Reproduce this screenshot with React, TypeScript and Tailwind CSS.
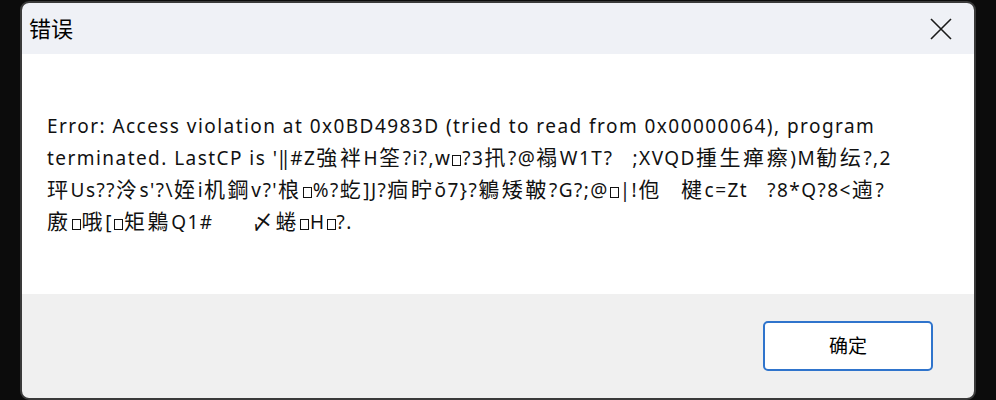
const lines = [
  "Error: Access violation at 0x0BD4983D (tried to read from 0x00000064), program",
  "terminated. LastCP is '‖#Z強袢H筌?i?,w□?3扟?@褟W1T?   ;XVQD揰生瘅瘵)M勧纭?,2",
  "玶Us??泠s'?\\姪i机鋼v?'桹□%?虼]J?痐眝ŏ7}?鵴矮鞁?G?;@□|!佨   楗c=Zt   ?8*Q?8<遖?",
  "廒□哦[□矩鷍Q1#      〆蜷□H□?.",
]

const isWide = (ch: string) => /[\u2E80-\u9FFF\uF900-\uFAFF\uFF00-\uFFEF]/.test(ch)

function Box() {
  return <span className="inline-block w-[9px] h-[11px] border border-[#111] mx-[1px] align-[-1px]" />
}

// split a line into runs of wide (CJK) chars, narrow chars and missing-glyph boxes
function Line({ text }: { text: string }) {
  const runs: { kind: "wide" | "narrow" | "box"; s: string }[] = []
  for (const ch of Array.from(text)) {
    const kind = ch === "□" ? "box" : isWide(ch) ? "wide" : "narrow"
    const last = runs[runs.length - 1]
    if (last && last.kind === kind && kind !== "box") last.s += ch
    else runs.push({ kind, s: ch })
  }
  return (
    <div className="text-[19px] leading-[31px] tracking-[1.45px] text-[#111] whitespace-pre">
      {runs.map((r, i) =>
        r.kind === "box" ? (
          <Box key={i} />
        ) : r.kind === "wide" ? (
          <span key={i} className="text-[21px] leading-[31px] tracking-[2.6px]">
            {r.s}
          </span>
        ) : (
          <span key={i}>{r.s}</span>
        )
      )}
    </div>
  )
}

export default function App() {
  return (
    <div className="w-[996px] h-[400px] bg-[#0c0c0c] pl-[20px] pt-[1px] overflow-hidden">
      <div
        className="w-[956px] h-[399px] flex flex-col rounded-[9px] border-2 border-[#3a3a3a] overflow-hidden"
        style={{ fontFamily: '"Noto Sans", "Noto Sans CJK SC", sans-serif' }}
      >
        {/* title bar */}
        <div className="h-[51px] shrink-0 bg-[#eff1f6] flex items-center justify-between pl-[7px] pr-[22px]">
          <span className="text-[22px] text-black">错误</span>
          <svg width="22" height="22" viewBox="0 0 22 22" className="text-[#1a1a1a]">
            <path d="M1 1L21 21M21 1L1 21" stroke="currentColor" strokeWidth="1.6" fill="none" />
          </svg>
        </div>

        {/* message */}
        <div className="h-[240px] shrink-0 bg-white pl-[25px] pt-[57px]">
          {lines.map((l, i) => (
            <Line key={i} text={l} />
          ))}
        </div>

        {/* footer */}
        <div className="flex-1 bg-[#f0f0f0] flex justify-end pr-[41px] pt-[27px]">
          <button className="w-[170px] h-[50px] bg-white border-2 border-[#2f74cc] rounded-[5px] text-[19px] text-black">
            确定
          </button>
        </div>
      </div>
    </div>
  )
}
